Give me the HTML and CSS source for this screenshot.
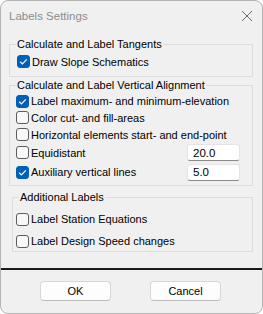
FILE: index.html
```html
<!DOCTYPE html>
<html>
<head>
    <title>Labels Settings</title>
    <link rel="stylesheet" href="styles.css">
</head>
<body>
    <div class="window">
        <div class="titlebar">
            <span class="title">Labels Settings</span>
            <svg class="close" width="12" height="12" viewBox="0 0 12 12">
                <path d="M1 1 L11 11 M11 1 L1 11" stroke="#6e6e6e" stroke-width="1" fill="none"/>
            </svg>
        </div>
        <div class="content">
            <fieldset class="group group-tangents">
                <legend>Calculate and Label Tangents</legend>
                <label class="row">
                    <span class="box checked"><svg width="11" height="11" viewBox="0 0 11 11"><path d="M2.2 5.8 L4.4 7.9 L8.8 3.3" stroke="#fff" stroke-width="1.2" fill="none"/></svg></span>
                    Draw Slope Schematics
                </label>
            </fieldset>

            <fieldset class="group group-vertical">
                <legend>Calculate and Label Vertical Alignment</legend>
                <label class="row r1">
                    <span class="box checked"><svg width="11" height="11" viewBox="0 0 11 11"><path d="M2.2 5.8 L4.4 7.9 L8.8 3.3" stroke="#fff" stroke-width="1.2" fill="none"/></svg></span>
                    Label maximum- and minimum-elevation
                </label>
                <label class="row r2">
                    <span class="box"></span>
                    Color cut- and fill-areas
                </label>
                <label class="row r3">
                    <span class="box"></span>
                    Horizontal elements start- and end-point
                </label>
                <div class="row r4">
                    <span class="box"></span>
                    <span class="grow">Equidistant</span>
                    <input class="num" type="text" value="20.0">
                </div>
                <div class="row r5">
                    <span class="box checked"><svg width="11" height="11" viewBox="0 0 11 11"><path d="M2.2 5.8 L4.4 7.9 L8.8 3.3" stroke="#fff" stroke-width="1.2" fill="none"/></svg></span>
                    <span class="grow">Auxiliary vertical lines</span>
                    <input class="num" type="text" value="5.0">
                </div>
            </fieldset>

            <fieldset class="group group-additional">
                <legend>Additional Labels</legend>
                <label class="row">
                    <span class="box"></span>
                    Label Station Equations
                </label>
                <label class="row">
                    <span class="box"></span>
                    Label Design Speed changes
                </label>
            </fieldset>
        </div>
        <div class="separator"></div>
        <div class="footer">
            <button>OK</button>
            <button>Cancel</button>
        </div>
    </div>
</body>
</html>
```

FILE: styles.css
```css
html, body {
    margin: 0;
    padding: 0;
    background: #ffffff;
}
body {
    font-family: "Liberation Sans", Arial, sans-serif;
    font-size: 11px;
    color: #000000;
}
.window {
    width: 263px;
    height: 314px;
    box-sizing: border-box;
    border: 1px solid #b4b4b4;
    border-radius: 8px;
    background-color: #f0f0f0;
    overflow: hidden;
}
.titlebar {
    height: 30px;
    display: flex;
    align-items: center;
    justify-content: space-between;
    padding: 0 9px 0 8px;
}
.title {
    color: #8c8c8c;
    font-size: 11.5px;
}
.content {
    padding: 6px 9px 0 8px;
}
.group {
    margin: 0;
    padding: 0 6px 0 6px;
    border: 1px solid #dcdcdc;
    min-inline-size: auto;
}
.group legend {
    padding: 0 1px;
    line-height: 14px;
    white-space: nowrap;
}
.row {
    display: flex;
    align-items: center;
    height: 17px;
    white-space: nowrap;
}
.box {
    width: 13px;
    height: 13px;
    box-sizing: border-box;
    border: 1px solid #5c5c5c;
    border-radius: 3px;
    background-color: #f8f8f8;
    margin-right: 2px;
    display: flex;
    align-items: center;
    justify-content: center;
    flex-shrink: 0;
}
.box.checked {
    background-color: #005fb8;
    border-color: #005fb8;
}
.grow {
    flex: 1;
}
.num {
    width: 53px;
    height: 17px;
    box-sizing: border-box;
    margin: 0 6px 0 0;
    padding: 0 5px;
    border: 1px solid #e4e4e4;
    border-bottom: 1px solid #8a8a8a;
    border-radius: 3px;
    background-color: #ffffff;
    font-family: inherit;
    font-size: 11.5px;
    color: #000000;
}
.group-tangents {
    padding-bottom: 6px;
}
.group-tangents .row {
    margin-top: 2px;
    padding-left: 1px;
}
.group-vertical {
    margin-top: 1px;
    padding-bottom: 3px;
}
.group-vertical .r1 {
    margin-top: 1px;
    height: 16px;
}
.group-vertical .r4 {
    height: 19px;
}
.group-vertical .r5 {
    height: 20px;
}
.group-additional {
    margin: 4px 0 0 3px;
    padding: 0 3px 2px 3px;
    display: flex;
    flex-direction: column;
    gap: 6px;
}
.group-additional legend {
    margin-left: 3px;
}
.group-additional .row {
    height: 16px;
}
.group-additional legend + .row {
    margin-top: 7px;
}
.separator {
    height: 2px;
    background-color: #1a1a1a;
    margin-top: 16px;
}
.footer {
    display: flex;
    justify-content: center;
    gap: 39px;
    padding: 11px 2px 0 0;
}
button {
    width: 71px;
    height: 20px;
    box-sizing: border-box;
    background-color: #fdfdfd;
    border: 1px solid #d6d6d6;
    border-bottom-color: #bdbdbd;
    border-radius: 4px;
    font-family: inherit;
    font-size: 11px;
    color: #000000;
    padding: 0;
}
```
